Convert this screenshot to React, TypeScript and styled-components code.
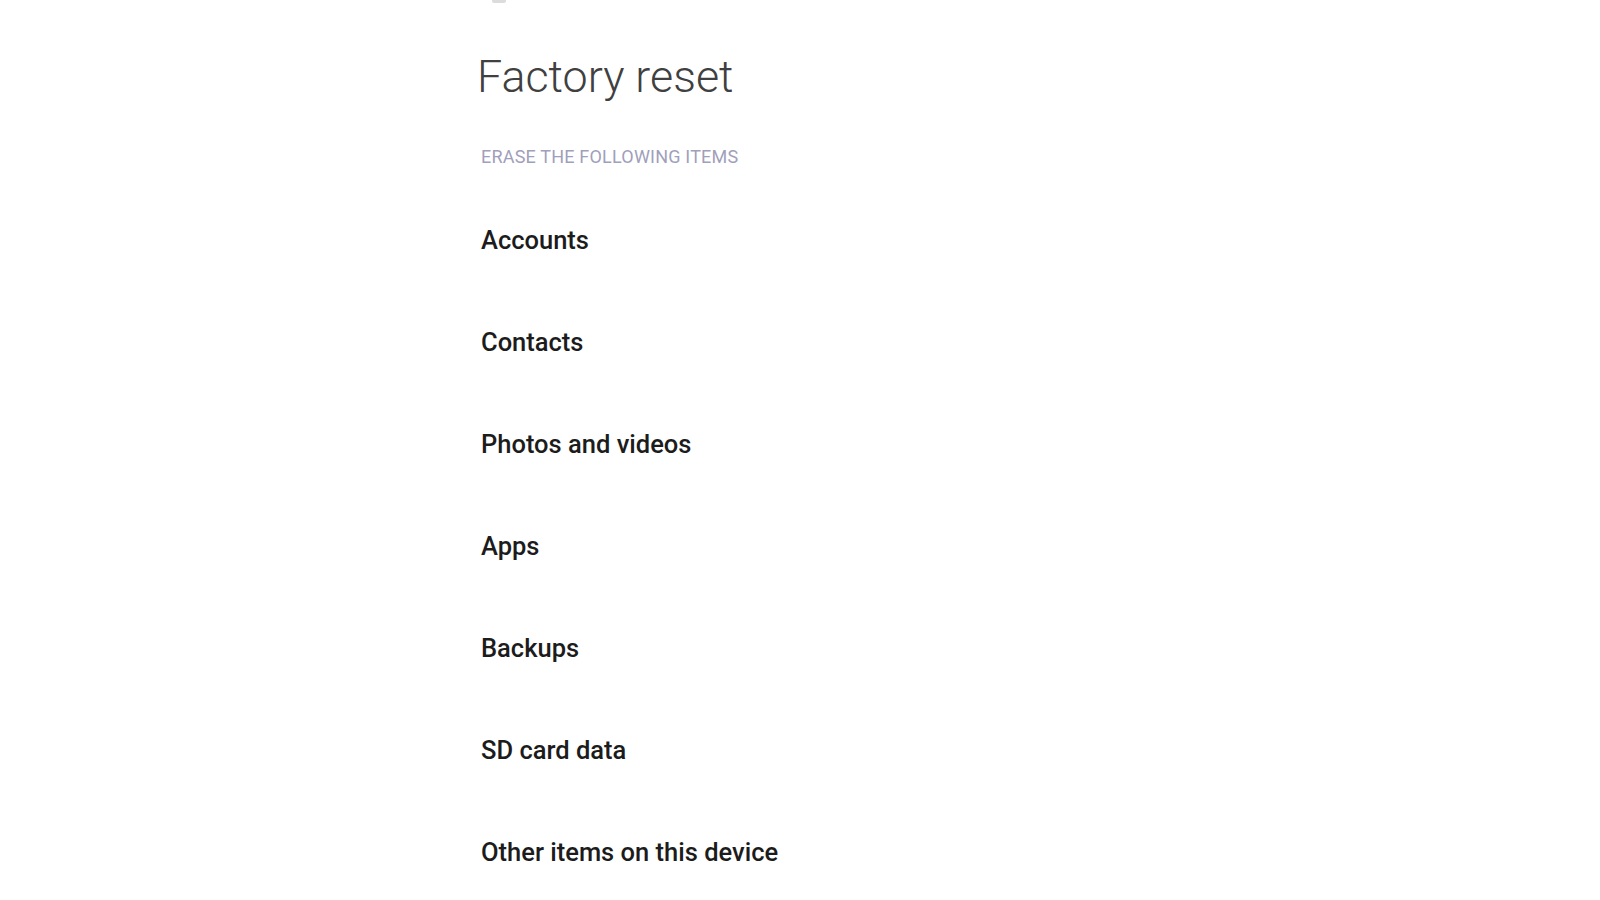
import React from "react";
import styled, { createGlobalStyle } from "styled-components";

const GlobalStyle = createGlobalStyle`
	html, body {
		margin: 0;
		padding: 0;
		background: #fff;
	}
	body {
		font-family: Roboto, "Noto Sans", sans-serif;
	}
`;

const Screen = styled.div`
	width: 100%;
	min-height: 900px;
	background: #fff;
	display: flex;
	flex-direction: column;
	padding: 47px 0 0 480px;
	box-sizing: border-box;
	position: relative;
	overflow: hidden;
`;

// bottom of the app bar icon, cut off at the top edge
const BackHint = styled.div`
	position: absolute;
	top: 0;
	left: 492px;
	width: 14px;
	height: 3px;
	border-radius: 0 0 2px 2px;
	background: #c4c4c4;
	opacity: 0.6;
`;

const Title = styled.h1`
	margin: 0 0 0 -3px;
	font-size: 44.8px;
	font-weight: 300;
	line-height: 60px;
	color: #404040;
`;

const SectionLabel = styled.div`
	margin: 38px 0 0 1px;
	font-size: 18px;
	line-height: 24px;
	font-weight: 400;
	color: #a19fbb;
	text-transform: uppercase;
	letter-spacing: 0.2px;
`;

const List = styled.ul`
	list-style: none;
	margin: 20px 0 0;
	padding: 0;
	display: flex;
	flex-direction: column;
`;

const Item = styled.li`
	height: 102px;
	display: flex;
	align-items: center;
	padding-left: 1px;
	font-size: 25.5px;
	font-weight: 500;
	color: #1c1c1c;
`;

const items = [
	"Accounts",
	"Contacts",
	"Photos and videos",
	"Apps",
	"Backups",
	"SD card data",
	"Other items on this device",
];

function App() {
	return (
		<React.Fragment>
			<GlobalStyle />
			<Screen>
				<BackHint />
				<Title>Factory reset</Title>
				<SectionLabel>Erase the following items</SectionLabel>
				<List>
					{items.map((label) => (
						<Item key={label}>{label}</Item>
					))}
				</List>
			</Screen>
		</React.Fragment>
	);
}

export default App;
